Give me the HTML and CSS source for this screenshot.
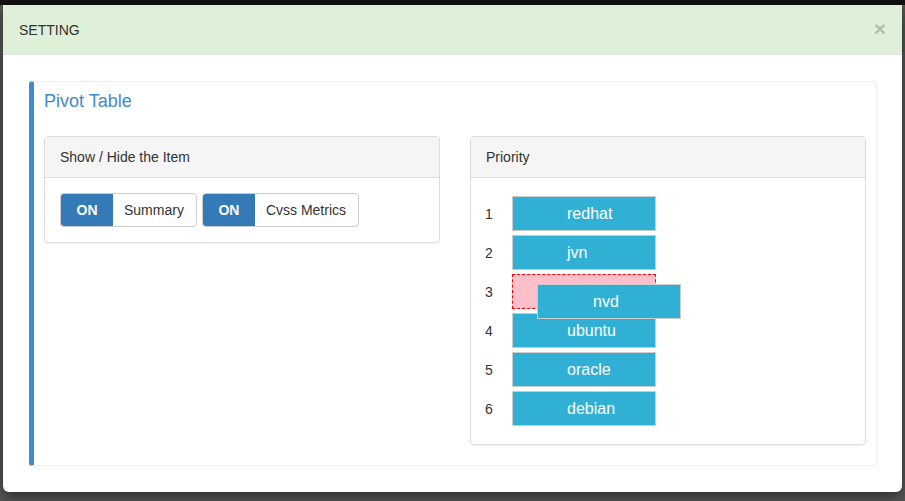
FILE: index.html
```html
<!DOCTYPE html>
<html>
<head>
<meta charset="utf-8">
<link rel="stylesheet" href="styles.css">
</head>
<body>
<div class="topbar"></div>
<div class="modal">
  <div class="modal-header">
    <span class="modal-title">SETTING</span>
    <span class="close">&times;</span>
  </div>
  <div class="modal-body">
    <div class="callout">
      <h4 class="callout-title">Pivot Table</h4>
      <div class="cols">
        <div class="panel panel-left">
          <div class="panel-heading">Show / Hide the Item</div>
          <div class="panel-body switches">
            <div class="switch"><span class="switch-on">ON</span><span class="switch-label">Summary</span></div>
            <div class="switch"><span class="switch-on">ON</span><span class="switch-label">Cvss Metrics</span></div>
          </div>
        </div>
        <div class="panel">
          <div class="panel-heading">Priority</div>
          <div class="panel-body priority">
            <div class="prow"><span class="pnum">1</span><span class="item">redhat</span></div>
            <div class="prow"><span class="pnum">2</span><span class="item">jvn</span></div>
            <div class="prow"><span class="pnum">3</span><span class="placeholder"><span class="item dragging">nvd</span></span></div>
            <div class="prow"><span class="pnum">4</span><span class="item">ubuntu</span></div>
            <div class="prow"><span class="pnum">5</span><span class="item">oracle</span></div>
            <div class="prow"><span class="pnum">6</span><span class="item">debian</span></div>
          </div>
        </div>
      </div>
    </div>
  </div>
</div>
</body>
</html>
```
FILE: styles.css
```css
* { box-sizing: border-box; }
html, body { margin: 0; padding: 0; }
body {
  width: 905px;
  height: 501px;
  overflow: hidden;
  background: #575757;
  font-family: "Liberation Sans", Arial, sans-serif;
  font-size: 14px;
  color: #333;
}
.topbar { height: 5px; background: #111; }
.modal {
  margin-left: 3px;
  width: 899px;
  height: 487px;
  background: #fff;
  border-radius: 0 0 6px 6px;
  box-shadow: 0 5px 15px rgba(0,0,0,.5);
  display: flex;
  flex-direction: column;
}
.modal-header {
  height: 50px;
  flex: none;
  background: #dff0d8;
  border-bottom: 1px solid #e5e5e5;
  display: flex;
  align-items: center;
  justify-content: space-between;
  padding: 0 16px 0 16px;
}
.modal-title { font-size: 14px; color: #333; }
.close {
  font-size: 21px;
  font-weight: bold;
  color: #000;
  opacity: .2;
  line-height: 1;
  margin-top: -3px;
}
.modal-body {
  flex: 1;
  padding: 26px 25px 26px 26px;
  display: flex;
}
.callout {
  flex: 1;
  border: 1px solid #eee;
  border-left: 5px solid #428bca;
  border-radius: 3px;
  padding: 9px 10px 20px 10px;
}
.callout-title {
  margin: 0 0 25px 0;
  font-size: 18px;
  line-height: 20px;
  font-weight: normal;
  color: #428bca;
}
.cols {
  display: grid;
  grid-template-columns: 396px 396px;
  column-gap: 30px;
  align-items: start;
}
.panel {
  border: 1px solid #ddd;
  border-radius: 4px;
  box-shadow: 0 1px 1px rgba(0,0,0,.05);
  background: #fff;
}
.panel-heading {
  height: 41px;
  background: #f5f5f5;
  border-bottom: 1px solid #ddd;
  border-radius: 3px 3px 0 0;
  padding: 0 15px;
  display: flex;
  align-items: center;
  color: #333;
}
.switches {
  padding: 15px;
  display: flex;
  gap: 5px;
}
.switch {
  display: inline-flex;
  height: 34px;
  border: 1px solid #ccc;
  border-radius: 4px;
  overflow: hidden;
}
.switch-on {
  width: 52px;
  background: #337ab7;
  color: #fff;
  font-weight: bold;
  display: flex;
  align-items: center;
  justify-content: center;
}
.switch-label {
  padding: 0 12px 0 11px;
  display: flex;
  align-items: center;
  color: #333;
}
.priority {
  padding: 18px 15px 18px 14px;
}
.prow {
  display: flex;
  align-items: center;
  margin-bottom: 4px;
}
.prow:last-child { margin-bottom: 0; }
.pnum {
  width: 27px;
  color: #333;
}
.item {
  display: flex;
  align-items: center;
  width: 144px;
  height: 35px;
  padding-left: 54px;
  background: #31b0d5;
  border: 1px solid #ccc;
  color: #fff;
  font-size: 16px;
}
.placeholder {
  position: relative;
  display: block;
  width: 144px;
  height: 35px;
  background: #ffc0cb;
  border: 1px dashed #f00;
}
.dragging {
  position: absolute;
  left: 24px;
  top: 9px;
  padding-left: 55px;
}
```
